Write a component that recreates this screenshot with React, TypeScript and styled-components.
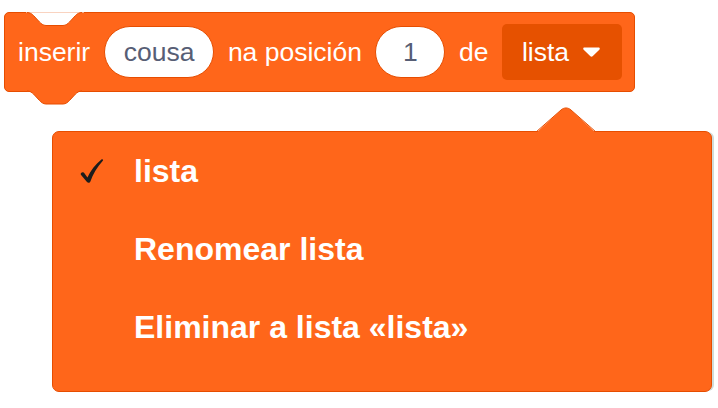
import React from "react";
import styled, { createGlobalStyle } from "styled-components";

const Global = createGlobalStyle`
  html, body { margin: 0; padding: 0; background: #ffffff; }
  body { font-family: "Liberation Sans", Arial, sans-serif; }
`;

const ORANGE = "#FF661A";
const DARK = "#E64D00";

const Page = styled.div`
  display: flex;
  flex-direction: column;
  align-items: flex-start;
  padding: 12px 0 0 4px;
`;

const Block = styled.div`
  position: relative;
  display: inline-flex;
  align-items: center;
  gap: 13.5px;
  box-sizing: border-box;
  height: 80px;
  padding: 0 12px 0 13px;
  background: ${ORANGE};
  border: 1px solid ${DARK};
  border-radius: 5px;
  color: #ffffff;
  font-size: 26.5px;
`;

const Label = styled.span`
  line-height: 1;
  white-space: nowrap;
`;

const Oval = styled.span<{ $min?: number }>`
  display: inline-flex;
  align-items: center;
  justify-content: center;
  box-sizing: border-box;
  height: 52px;
  min-width: ${(p) => p.$min ?? 52}px;
  padding: 0 19px;
  border-radius: 26px;
  background: #ffffff;
  border: 1px solid ${DARK};
  color: #575e75;
  font-size: 26.5px;
  line-height: 1;
`;

const Dropdown = styled.span`
  display: inline-flex;
  align-items: center;
  gap: 14px;
  box-sizing: border-box;
  height: 56px;
  padding: 0 22px 0 20px;
  border-radius: 5px;
  background: #e65100;
  color: #ffffff;
  font-size: 26.5px;
  line-height: 1;
`;

const NotchSvg = styled.svg`
  position: absolute;
  left: 22px;
  top: -1px;
  overflow: visible;
`;

const TabSvg = styled.svg`
  position: absolute;
  left: 22px;
  top: 100%;
  overflow: visible;
`;

const Menu = styled.div`
  position: relative;
  box-sizing: border-box;
  width: 660px;
  height: 261px;
  margin: 39px 0 0 48px;
  padding: 0 0 24px;
  background: ${ORANGE};
  border: 1px solid ${DARK};
  border-radius: 7px;
  box-shadow: 3px 0 0 -1px rgba(170, 190, 185, 0.55);
  display: flex;
  flex-direction: column;
`;

const MenuArrow = styled.svg`
  position: absolute;
  top: -25px;
  left: 482px;
  overflow: visible;
`;

const ScrollNub = styled.div`
  position: absolute;
  right: 7px;
  bottom: -11px;
  width: 13px;
  height: 10px;
  background: #b9b9b9;
  border-radius: 0 0 3px 3px;
`;

const Item = styled.div`
  display: flex;
  align-items: center;
  height: 79px;
  color: #ffffff;
  font-size: 32px;
  font-weight: bold;
  white-space: nowrap;
`;

const CheckSlot = styled.span`
  display: inline-flex;
  align-items: center;
  width: 54px;
  height: 24px;
  margin-left: 27px;
`;

const notchFill =
  "M0,0 C3,0 5,1.5 6.5,3 L12.5,9.5 C14,11 16,13 19,13 H36 C39,13 41,11 42.5,9.5 L48.5,3 C50,1.5 52,0 55,0 Z";
const notchStroke =
  "M0,0 C3,0 5,1.5 6.5,3 L12.5,9.5 C14,11 16,13 19,13 H36 C39,13 41,11 42.5,9.5 L48.5,3 C50,1.5 52,0 55,0";

const CheckIcon = () => (
  <svg width="24" height="24" viewBox="0 0 24 24">
    <path
      d="M0.8,14.6 C1.8,12.9 3.6,13 4.6,14.4 L7.4,18.4 C10.6,11.8 15.2,5.6 21.4,0.6 C22.6,-0.2 23.6,0.8 22.8,1.8 C17,8.2 13,15 10.4,22.4 C9.8,23.9 8,24.1 7,22.9 L1.1,16 C0.7,15.5 0.6,15 0.8,14.6 Z"
      fill="#1c1c1c"
    />
  </svg>
);

export default function App() {
  return (
    <>
      <Global />
      <Page>
        <Block>
          <NotchSvg width="56" height="15" viewBox="0 0 56 15">
            <path d={notchFill} fill="#ffffff" transform="translate(0,0.5)" />
            <rect x="-1" y="-1" width="58" height="1.5" fill="#ffffff" />
            <path d={notchStroke} fill="none" stroke={DARK} strokeWidth="1" transform="translate(0,0.5)" />
          </NotchSvg>
          <Label>inserir</Label>
          <Oval>cousa</Oval>
          <Label>na posición</Label>
          <Oval $min={70}>1</Oval>
          <Label>de</Label>
          <Dropdown>
            lista
            <svg width="17" height="10" viewBox="0 0 17 10">
              <path
                d="M1.5,0.5 H15.5 C16.8,0.5 17.2,1.8 16.3,2.7 L9.6,9.2 C9,9.8 8,9.8 7.4,9.2 L0.7,2.7 C-0.2,1.8 0.2,0.5 1.5,0.5 Z"
                fill="#ffffff"
              />
            </svg>
          </Dropdown>
          <TabSvg width="56" height="15" viewBox="0 0 56 15">
            <rect x="0" y="-1" width="55" height="1.5" fill={ORANGE} />
            <path d={notchFill} fill={ORANGE} />
            <path d={notchStroke} fill="none" stroke={DARK} strokeWidth="1" />
          </TabSvg>
        </Block>
        <Menu>
          <MenuArrow width="62" height="26" viewBox="0 0 62 26">
            <path d="M1,26 L26,3 C29,0.3 33,0.3 36,3 L61,26 Z" fill={ORANGE} />
            <path d="M1,25 L26,3 C29,0.3 33,0.3 36,3 L61,25" fill="none" stroke={DARK} strokeWidth="1" />
          </MenuArrow>
          <Item>
            <CheckSlot>
              <CheckIcon />
            </CheckSlot>
            lista
          </Item>
          <Item>
            <CheckSlot />
            Renomear lista
          </Item>
          <Item>
            <CheckSlot />
            Eliminar a lista «lista»
          </Item>
          <ScrollNub />
        </Menu>
      </Page>
    </>
  );
}
